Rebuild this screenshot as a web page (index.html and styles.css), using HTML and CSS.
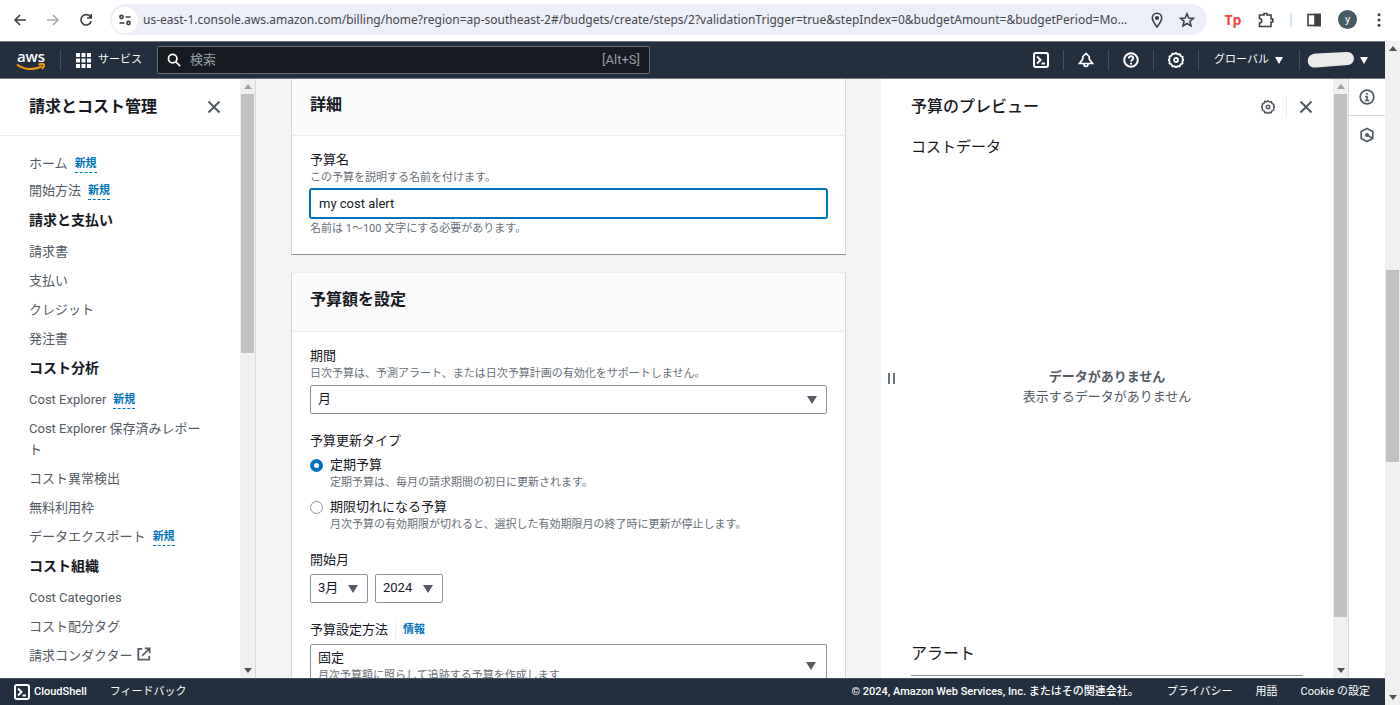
FILE: index.html
```html
<!DOCTYPE html>
<html lang="ja">
<head>
<meta charset="utf-8">
<title>予算を作成</title>
<link rel="stylesheet" href="styles.css">
</head>
<body>
<header class="browser">
  <button class="tool" aria-label="戻る"><svg viewBox="0 0 16 16" class="ico16 dark"><path d="M14 8H3M8 3L3 8l5 5"/></svg></button>
  <button class="tool" aria-label="進む"><svg viewBox="0 0 16 16" class="ico16 faded"><path d="M2 8h11M8 3l5 5-5 5"/></svg></button>
  <button class="tool" aria-label="再読み込み"><svg viewBox="0 0 16 16" class="ico16 dark"><path d="M12.5 5A5.2 5.2 0 1 0 13.2 9M13.2 2v4H9"/></svg></button>
  <div class="omnibox">
    <button class="site" aria-label="サイト情報"><svg viewBox="0 0 16 16" class="ico16 dark"><circle cx="4.500" cy="5" r="1.600"/><path d="M8.500 5h5M2.500 11h5"/><circle cx="11.500" cy="11" r="1.600"/></svg></button>
    <input class="url" type="text" aria-label="アドレス" value="us-east-1.console.aws.amazon.com/billing/home?region=ap-southeast-2#/budgets/create/steps/2?validationTrigger=true&amp;stepIndex=0&amp;budgetAmount=&amp;budgetPeriod=Mo...">
    <button class="plain" aria-label="位置情報"><svg viewBox="0 0 16 16" class="ico16 dark"><path d="M8 15C5 11 3.300 8.800 3.300 6a4.700 4.700 0 0 1 9.400 0C12.700 8.800 11 11 8 15z"/><circle cx="8" cy="6" r="1.300" class="solid"/></svg></button>
    <button class="plain" aria-label="ブックマーク"><svg viewBox="0 0 16 16" class="ico16 dark"><path d="M8 1.800l1.800 4.200 4.600.4-3.500 3 1.100 4.500L8 11.500l-4 2.400 1.100-4.500-3.500-3 4.600-.4z"/></svg></button>
  </div>
  <button class="tool ext-tp" aria-label="拡張機能 Tp">Tp</button>
  <button class="tool" aria-label="拡張機能"><svg viewBox="0 0 16 16" class="ico16 dark"><path d="M1.500 3H6V1.500h3V3h4v4h1.800v3H13v4.500H1.500V11C4.500 11 4.500 6.500 1.500 6.500z"/></svg></button>
  <span class="bar-divider"></span>
  <button class="tool" aria-label="サイドパネル"><svg viewBox="0 0 16 16" class="ico16 dark"><rect x="2" y="2.500" width="12" height="11"/><path class="solid" d="M9 2.500h5v11H9z"/></svg></button>
  <button class="avatar" aria-label="プロフィール">y</button>
  <button class="tool more" aria-label="メニュー"><svg viewBox="0 0 16 16" class="ico16"><circle cx="8" cy="2.800" r="1.500"/><circle cx="8" cy="8" r="1.500"/><circle cx="8" cy="13.200" r="1.500"/></svg></button>
</header>

<div class="viewport">
  <div class="page">
    <nav class="topnav">
      <a class="logo" href="#" aria-label="aws"><span>aws</span><svg viewBox="0 0 30 8"><path d="M1 1.500C8 7 19 7.500 26 3" /><path d="M22.500 1.500c3-.8 5-.5 5.400 0 .3.800-.4 3-1.900 4.500"/></svg></a>
      <span class="nav-sep"></span>
      <button class="services"><svg viewBox="0 0 15 15"><path d="M0 0h4v4H0zM5.500 0h4v4h-4zM11 0h4v4h-4zM0 5.500h4v4H0zM5.500 5.500h4v4h-4zM11 5.500h4v4h-4zM0 11h4v4H0zM5.500 11h4v4h-4zM11 11h4v4h-4z"/></svg>サービス</button>
      <label class="search">
        <svg viewBox="0 0 16 16" class="ico14 light"><circle cx="6.500" cy="6.500" r="4.800"/><path d="M10 10l5 5"/></svg>
        <input type="search" placeholder="検索" aria-label="検索">
        <span>[Alt+S]</span>
      </label>
      <div class="nav-tools">
        <button aria-label="CloudShell"><svg viewBox="0 0 16 16" class="ico16 light"><rect x="1" y="1" width="14" height="14" rx="2"/><path d="M4 4.500L7.500 8 4 11.500M8.500 11.500H12"/></svg></button>
        <button aria-label="通知"><svg viewBox="0 0 16 16" class="ico16 light bell"><path d="M8 1.500L4.800 4.500v2.500L1.500 11.500h13L11.200 7V4.500zM6 12c0 3.300 4 3.300 4 0"/></svg></button>
        <button aria-label="ヘルプ"><svg viewBox="0 0 16 16" class="ico16 light"><circle cx="8" cy="8" r="6.800"/><path d="M5.800 6.500c0-3 4.500-3 4.500-.3C10.300 8 8 7.800 8 9.500M8 10.800v1.600"/></svg></button>
        <button aria-label="設定"><svg viewBox="0 0 16 16" class="ico16 light gear"><path d="M8 1l1.700 1.300 2.100-.2.900 2 2 .9-.2 2L15.500 8l-1.200 1.500.2 2-2 .9-.8 2-2-.2L8 15.300l-1.700-1.100-2 .2-.8-2-2-.9.200-2L.500 8l1.200-1.500-.2-2 2-.9.900-2 2.100.2z"/><circle cx="8" cy="8" r="2"/></svg></button>
        <button class="region">グローバル<i class="caret"></i></button>
        <button class="account" aria-label="アカウント"><svg viewBox="0 0 48 18"><path d="M9 2.500L40 1c9 0 9 12 1 13L9 16.500c-11 1-11-14 0-14z"/></svg><i class="caret"></i></button>
      </div>
    </nav>

    <div class="main">
      <aside class="sidebar">
        <div class="side-scroll">
          <div class="side-head"><h2>請求とコスト管理</h2><button class="plain" aria-label="閉じる"><svg viewBox="0 0 16 16" class="ico16 gray"><path d="M2.500 2.500l11 11M13.500 2.500l-11 11"/></svg></button></div>
          <div class="side-nav">
            <ul class="tight">
              <li><a href="#">ホーム</a><button class="new">新規</button></li>
              <li><a href="#">開始方法</a><button class="new">新規</button></li>
            </ul>
            <h3>請求と支払い</h3>
            <ul>
              <li><a href="#">請求書</a></li>
              <li><a href="#">支払い</a></li>
              <li><a href="#">クレジット</a></li>
              <li><a href="#">発注書</a></li>
            </ul>
            <h3>コスト分析</h3>
            <ul>
              <li><a href="#">Cost Explorer</a><button class="new">新規</button></li>
              <li><a href="#">Cost Explorer 保存済みレポート</a></li>
              <li><a href="#">コスト異常検出</a></li>
              <li><a href="#">無料利用枠</a></li>
              <li><a href="#">データエクスポート</a><button class="new">新規</button></li>
            </ul>
            <h3>コスト組織</h3>
            <ul>
              <li><a href="#">Cost Categories</a></li>
              <li><a href="#">コスト配分タグ</a></li>
              <li><a href="#">請求コンダクター<svg viewBox="0 0 16 16" class="ico14 gray external"><path d="M6 2H1.500v12.500H14V10M9 1.500h5.500V7M14.500 1.500L6 10"/></svg></a></li>
            </ul>
          </div>
        </div>
        <div class="scrollbar side-bar"><i class="up"></i><i class="thumb"></i><i class="rest"></i><i class="down"></i></div>
      </aside>

      <main class="content">
        <section class="card">
          <h2>詳細</h2>
          <div class="card-body">
            <label class="label" for="name">予算名</label>
            <p class="hint">この予算を説明する名前を付けます。</p>
            <input class="field focused" id="name" type="text" value="my cost alert">
            <p class="hint below">名前は 1～100 文字にする必要があります。</p>
          </div>
        </section>
        <section class="card second">
          <h2>予算額を設定</h2>
          <div class="card-body">
            <div class="group">
              <label class="label" for="period">期間</label>
              <p class="hint">日次予算は、予測アラート、または日次予算計画の有効化をサポートしません。</p>
              <div class="select"><select id="period"><option>月</option></select><i class="caret"></i></div>
            </div>
            <fieldset class="group">
              <legend class="label">予算更新タイプ</legend>
              <div class="radio"><input type="radio" name="type" id="r1" checked><label for="r1">定期予算</label><p class="hint">定期予算は、毎月の請求期間の初日に更新されます。</p></div>
              <div class="radio"><input type="radio" name="type" id="r2"><label for="r2">期限切れになる予算</label><p class="hint">月次予算の有効期限が切れると、選択した有効期限月の終了時に更新が停止します。</p></div>
            </fieldset>
            <div class="group">
              <label class="label" for="month">開始月</label>
              <div class="months">
                <div class="select month"><select id="month"><option>3月</option></select><i class="caret"></i></div>
                <div class="select year"><select aria-label="開始年"><option>2024</option></select><i class="caret"></i></div>
              </div>
            </div>
            <div class="group">
              <div class="label-row"><span class="label" id="method">予算設定方法</span><a class="info" href="#">情報</a></div>
              <button class="rich" aria-haspopup="listbox" aria-labelledby="method"><span><b>固定</b><small>月次予算額に照らして追跡する予算を作成します</small></span><i class="caret"></i></button>
            </div>
          </div>
        </section>
      </main>

      <aside class="preview">
        <button class="handle" aria-label="サイズ変更"></button>
        <div class="preview-body">
          <div class="preview-head">
            <h2>予算のプレビュー</h2>
            <button class="plain" aria-label="設定"><svg viewBox="0 0 16 16" class="ico14 gray gear"><path d="M8 1l1.700 1.300 2.100-.2.900 2 2 .9-.2 2L15.500 8l-1.200 1.500.2 2-2 .9-.8 2-2-.2L8 15.300l-1.700-1.100-2 .2-.8-2-2-.9.200-2L.500 8l1.200-1.500-.2-2 2-.9.900-2 2.100.2z"/><circle cx="8" cy="8" r="2"/></svg></button>
            <span class="head-sep"></span>
            <button class="plain" aria-label="閉じる"><svg viewBox="0 0 16 16" class="ico16 gray"><path d="M2.500 2.500l11 11M13.500 2.500l-11 11"/></svg></button>
          </div>
          <h3>コストデータ</h3>
          <div class="empty"><b>データがありません</b><span>表示するデータがありません</span></div>
          <h3 class="alerts">アラート</h3>
        </div>
        <div class="scrollbar preview-bar"><i class="up"></i><i class="thumb"></i><i class="rest"></i><i class="down"></i></div>
      </aside>

      <div class="rail">
        <button aria-label="情報"><svg viewBox="0 0 16 16" class="ico16 gray thin"><circle cx="8" cy="8" r="6.800"/><path d="M8 4v1.800M6.200 7.500H8v4M5.800 11.500h4.400"/></svg></button>
        <button aria-label="診断"><svg viewBox="0 0 16 16" class="ico16 gray thin"><path d="M8 1.500l5.800 3v7L8 14.500l-5.800-3v-7z"/><circle cx="8" cy="8" r="1.200"/><path d="M8 8l5 3"/></svg></button>
      </div>
    </div>

    <footer class="footer">
      <button><svg viewBox="0 0 16 16" class="ico16 light"><rect x="1" y="1" width="14" height="14" rx="2"/><path d="M4 4.500L7.500 8 4 11.500M8.500 11.500H12"/></svg><b>CloudShell</b></button>
      <a href="#" class="feedback">フィードバック</a>
      <span class="copy">© 2024, Amazon Web Services, Inc. またはその関連会社。</span>
      <a href="#">プライバシー</a>
      <a href="#">用語</a>
      <a href="#">Cookie の設定</a>
    </footer>
  </div>
  <div class="scrollbar page-bar"><i class="up strong"></i><i class="before"></i><i class="thumb"></i><i class="rest"></i><i class="down"></i></div>
</div>
</body>
</html>
```
FILE: styles.css
```css
* { box-sizing: border-box; }
body {
  margin: 0;
  height: 100vh;
  display: flex;
  flex-direction: column;
  overflow: hidden;
  background: #fff;
  color: #16191f;
  font: 13px/20px Roboto, "Noto Sans CJK JP", sans-serif;
}
h2, h3, p, ul, fieldset { margin: 0; padding: 0; border: 0; }
ul { list-style: none; }
a { color: inherit; text-decoration: none; }
button { padding: 0; border: 0; background: none; color: inherit; font: inherit; display: flex; align-items: center; justify-content: center; }
svg { fill: none; stroke-width: 2; flex: none; display: block; }
.ico16 { width: 16px; height: 16px; }
.ico14 { width: 14px; height: 14px; }
.dark { stroke: #3c4043; stroke-width: 1.6; }
.faded { stroke: #a5a8ab; stroke-width: 1.6; }
.light { stroke: #fff; }
.gray { stroke: #545b64; }
.gear { stroke-width: 1.8; }
.bell, .thin { stroke-width: 1.7; }
.solid { fill: #3c4043; }
.caret { flex: none; border: 5px solid transparent; border-top: 8px solid currentColor; border-bottom: 0; }

/* Browser toolbar */
.browser { flex: none; height: 41px; display: flex; align-items: center; padding: 0 13px 2px 12px; }
.tool { flex: none; width: 16px; height: 32px; margin-right: 17px; }
.omnibox { flex: 1; height: 31px; display: flex; align-items: center; gap: 14px; padding: 0 12px 0 2px; margin-left: -1px; margin-right: 18px; border-radius: 16px; background: #eceef8; }
.site { width: 26px; height: 26px; border-radius: 50%; background: #fff; }
.url { flex: 1; min-width: 0; margin: 0 -8px 0 -9px; padding: 0; border: 0; background: none; color: #45484d; font: 12px/20px "Noto Sans", sans-serif; }
.ext-tp { color: #f2443d; font: bold 14px/20px "Open Sans", sans-serif; }
.bar-divider { width: 2px; height: 14px; margin: 0 14px 0 -1px; background: #d3e3fd; }
.avatar { width: 19px; height: 19px; margin: 0 14px 0 -1px; border-radius: 50%; background: #455a64; color: #fff; font-size: 11px; line-height: 14px; }
.more { margin-right: 0; }
.more svg { fill: #3c4043; }

.viewport { flex: 1; min-height: 0; display: flex; }
.page { flex: 1; min-width: 0; display: flex; flex-direction: column; }

/* Console navigation */
.topnav { flex: none; height: 38px; display: flex; align-items: center; padding: 0 17px 0 16px; border-top: 1px solid #6b7480; border-bottom: 1px solid #6b7480; background: #232f3e; color: #fff; }
.logo { width: 30px; display: flex; flex-direction: column; align-items: center; font: 600 15px/12px "Open Sans", sans-serif; }
.logo svg { width: 30px; height: 8px; stroke: #f90; margin-top: 1px; }
.nav-sep { width: 1px; height: 20px; margin: 0 15px 0 14px; background: #45505d; }
.services { gap: 7px; margin-right: 15px; font-size: 11px; }
.services svg { width: 15px; height: 15px; fill: #fff; }
.search { flex: 0 1 493px; height: 28px; display: flex; align-items: center; padding: 0 9px; gap: 9px; border: 1px solid #687078; border-radius: 2px; background: #161920; color: #95a0a8; }
.search input { flex: 1; min-width: 0; padding: 0; border: 0; background: none; color: #fff; font: inherit; }
.search input::placeholder { color: #95a0a8; opacity: 1; }
.nav-tools { margin-left: auto; display: flex; align-items: center; }
.nav-tools button { height: 20px; padding: 0 14px; border-left: 1px solid #45505d; }
.nav-tools button:first-child { border-left: 0; }
.nav-tools .region { gap: 6px; padding: 0 16px 0 15px; font-size: 11px; }
.nav-tools .account { gap: 5px; padding: 0 0 0 7px; }
.topnav .caret { border-width: 7px 4px 0; }
.account svg { width: 48px; height: 18px; fill: #eaeaea; }

/* Drawn scroll bars */
.scrollbar { flex: none; width: 15px; display: flex; flex-direction: column; align-items: center; background: #f0f0f0; }
.scrollbar i { width: 13px; }
.scrollbar .up, .scrollbar .down { width: 8px; height: 5px; margin: 5px 0; border: 4px solid transparent; border-top: 0; border-bottom: 5px solid #a0a0a0; }
.scrollbar .down { border-top: 5px solid #505050; border-bottom: 0; }
.scrollbar .strong { border-bottom-color: #505050; }
.thumb { background: #c1c1c1; }
.side-bar .thumb { flex: 259; }
.side-bar .rest { flex: 310; }
.preview-bar .thumb { flex: 523; }
.preview-bar .rest { flex: 46; }
.page-bar .before { flex: 214; }
.page-bar .thumb { flex: 193; }
.page-bar .rest { flex: 228; }

.main { flex: 1; min-height: 0; display: flex; background: #f2f3f3; }

/* Side navigation */
.sidebar { flex: none; width: 256px; display: flex; border-right: 1px solid #d5dbdb; background: #fff; }
.side-scroll { flex: 1; overflow: hidden; }
.side-head { height: 57px; display: flex; align-items: center; justify-content: space-between; padding: 0 18px 1px 29px; border-bottom: 1px solid #eaeded; }
.side-head h2 { font-size: 16px; line-height: 24px; }
.side-nav { padding: 17px 38px 0 29px; color: #545b64; line-height: 21px; }
.side-nav ul { display: flex; flex-direction: column; gap: 8px; }
.side-nav .tight { gap: 6px; }
.side-nav li { display: flex; align-items: center; }
.side-nav h3 { margin: 8px 0 10px; font-size: 14px; line-height: 22px; color: #16191f; }
.new { margin-left: 7px; border-bottom: 1px dashed #0073bb; color: #0073bb; font-weight: bold; font-size: 11px; line-height: 17px; }
.side-nav .external { display: inline-block; margin-left: 5px; vertical-align: -1px; }

/* Budget form */
.content { flex: 1; min-width: 0; overflow: hidden; padding: 0 35px; }
.card { border: 1px solid #d5dbdb; border-top: 0; border-bottom-color: #879596; background: #fff; }
.card.second { margin-top: 17px; border-top: 1px solid #eaeded; }
.card > h2 { padding: 14px 18px 18px; border-bottom: 1px solid #eaeded; background: #fafafa; font-size: 16px; line-height: 24px; }
.card.second > h2 { padding: 15px 18px 19px; }
.card-body { padding: 14px 18px 17px; }
.label { display: block; padding: 0; line-height: 20px; }
.hint { color: #687078; font-size: 11px; line-height: 16px; }
.hint.below { margin-top: 3px; }
.field { display: block; width: 100%; height: 29px; margin-top: 3px; padding: 0 8px 1px; border: 1px solid #0073bb; border-radius: 2px; box-shadow: 0 0 0 1px #0073bb; font: inherit; color: #16191f; outline: 0; }
.group { margin-bottom: 17px; }
.select { display: grid; align-items: center; height: 29px; margin-top: 3px; color: #545b64; }
.select > * { grid-area: 1 / 1; }
.select select { appearance: none; width: 100%; height: 29px; padding: 0 7px 2px; border: 1px solid #879596; border-radius: 2px; background: #fff; color: #16191f; font: inherit; }
.select .caret { justify-self: end; margin-right: 10px; pointer-events: none; }
.radio { display: grid; grid-template-columns: 20px 1fr; align-items: center; margin-top: 4px; }
.radio + .radio { margin-top: 6px; }
.radio input { appearance: none; width: 13px; height: 13px; margin: 1px 0 0; border: 1px solid #879596; border-radius: 50%; background: #fff; }
.radio input:checked { border: 4px solid #0073bb; }
.radio .hint { grid-column: 2; }
.months { display: flex; gap: 7px; }
.months .select { margin-top: 4px; }
.month { width: 58px; }
.year { width: 68px; }
.label-row { display: flex; align-items: center; }
.info { margin-left: 7px; padding-left: 7px; border-left: 1px solid #eaeded; color: #0073bb; font-size: 11px; font-weight: bold; line-height: 16px; }
.rich { width: 100%; justify-content: space-between; margin-top: 4px; padding: 3px 10px 4px 7px; border: 1px solid #879596; border-radius: 2px; background: #fff; color: #545b64; text-align: left; }
.rich b { display: block; font-weight: normal; color: #16191f; line-height: 20px; }
.rich small { display: block; color: #687078; font-size: 11px; line-height: 16px; }

/* Preview panel */
.preview { flex: 0 0 467px; display: flex; background: #fff; }
.handle { width: 7px; height: 11px; margin: 0 0 0 7px; align-self: center; border: 2px solid #687078; border-top: 0; border-bottom: 0; }
.preview-body { flex: 1; min-width: 0; display: flex; flex-direction: column; padding: 0 30px 2px 16px; }
.preview-head { display: flex; align-items: center; margin: 16px -11px 0 0; }
.preview-head h2 { flex: 1; font-size: 16px; line-height: 24px; font-weight: 500; }
.head-sep { width: 1px; height: 22px; margin: 0 11px; background: #eaeded; }
.preview h3 { font-size: 15px; line-height: 24px; font-weight: normal; margin-top: 16px; }
.empty { flex: 1; display: flex; flex-direction: column; align-items: center; justify-content: center; padding-bottom: 28px; color: #545b64; }
.preview .alerts { margin: 0; padding-bottom: 9px; border-bottom: 1px solid #879596; font-size: 16px; }
.rail { flex: none; width: 37px; border-left: 1px solid #d5dbdb; background: #fff; }
.rail button { width: 100%; height: 37px; border-bottom: 1px solid #d5dbdb; }
.rail button:last-child { border: 0; }

/* Footer */
.footer { flex: none; height: 27px; display: flex; align-items: center; gap: 23px; padding: 0 15px 0 14px; border-top: 1px solid #45505d; background: #232f3e; color: #fff; font-size: 11px; }
.footer button { gap: 4px; }
.footer b { font-weight: 500; }
.copy { margin-left: auto; margin-right: 5px; font-weight: 500; }
```
